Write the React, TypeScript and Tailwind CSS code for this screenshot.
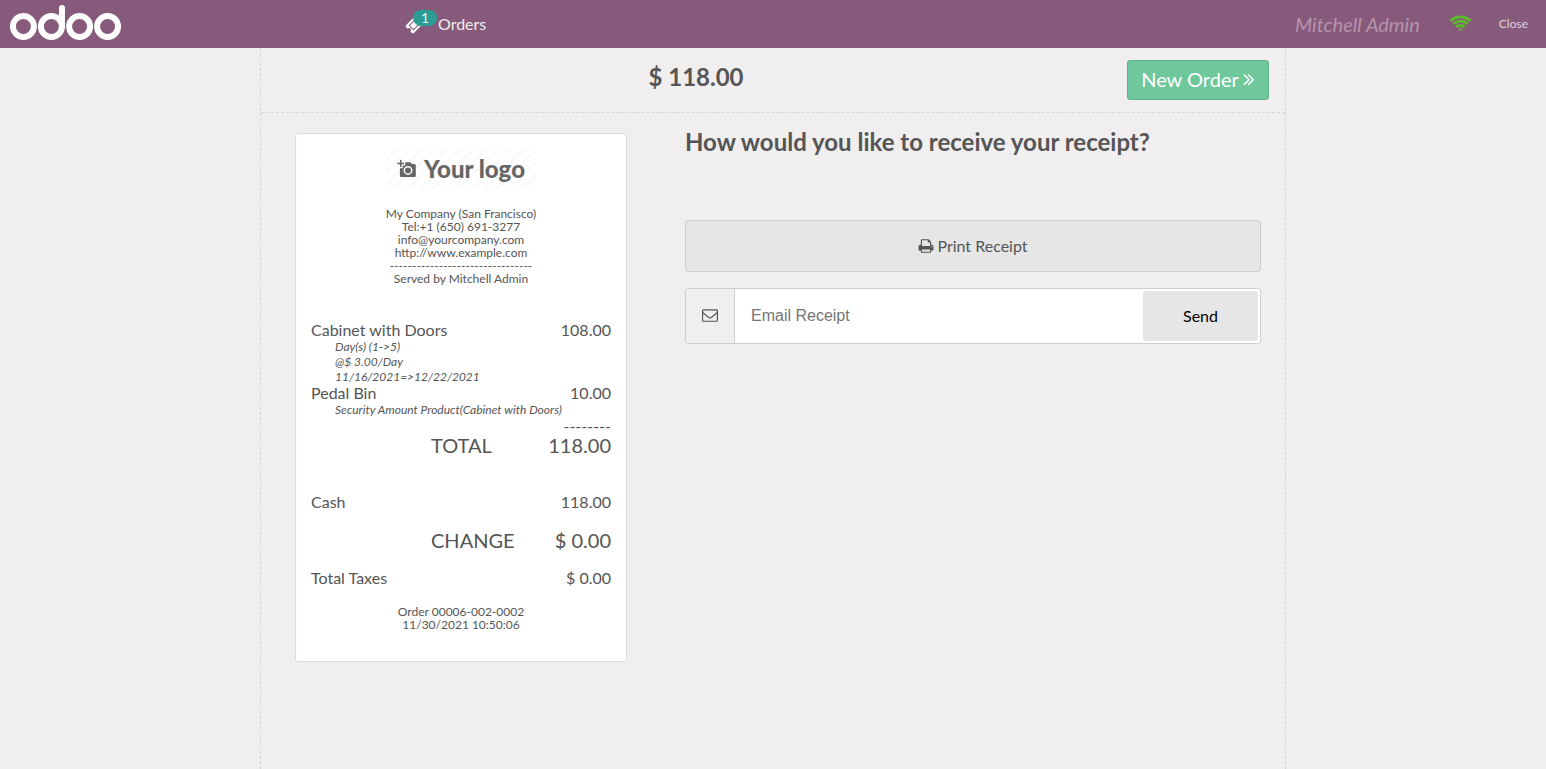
import type { ReactNode } from "react";

type IconProps = { path: string; className: string; viewBox?: string };

function Icon({ path, className, viewBox = "0 0 1792 1792" }: IconProps) {
  return (
    <svg viewBox={viewBox} className={className} fill="currentColor" aria-hidden="true">
      <path d={path} />
    </svg>
  );
}

const TICKET =
  "M1024 452l316 316-572 572-316-316zm-211 979l618-618q19-19 19-45t-19-45l-362-362q-18-18-45-18t-45 18l-618 618q-19 19-19 45t19 45l362 362q18 18 45 18t45-18zm889-637l-907 908q-37 37-90.5 37t-90.5-37l-126-125q56-56 56-136t-56-136-136-56-136 56l-125-126q-37-37-37-90.5t37-90.5l907-906q37-37 90.5-37t90.5 37l125 125q-56 56-56 136t56 136 136 56 136-56l126 125q37 37 37 90.5t-37 90.5z";
const WIFI =
  "M1024 1523q-20 0-93-73.5t-73-93.5q0-32 62.5-54t103.5-22 103.5 22 62.5 54q0 20-73 93.5t-93 73.5zm270-271q-2 0-40-25t-101.5-50-128.5-25-128.5 25-101 50-40.5 25q-18 0-93.5-75t-75.5-93q0-13 10-23 78-77 196-121t233-44 233 44 196 121q10 10 10 23 0 18-75.5 93t-93.5 75zm273-272q-11 0-23-8-136-105-252-154.5t-268-49.5q-85 0-170.5 22t-149 53-113.500 62-79 53-31 22q-17 0-92-75t-75-93q0-12 10-22 132-132 320-205t380-73 380 73 320 205q10 10 10 22 0 18-75 93t-92 75zm271-271q-11 0-22-9-179-157-371.500-236.500t-420.500-79.500-420.500 79.500-371.500 236.500q-11 9-22 9-17 0-92.500-75t-75.500-93q0-13 10-23 187-186 445-288t527-102 527 102 445 288q10 10 10 23 0 18-75.500 93t-92.500 75z";
const PRINTER =
  "M448 1536h896v-256h-896v256zm0-640h896v-384h-160q-40 0-68-28t-28-68v-160h-640v640zm1152 64q0-26-19-45t-45-19-45 19-19 45 19 45 45 19 45-19 19-45zm128 0v416q0 13-9.5 22.5t-22.5 9.5h-224v160q0 40-28 68t-68 28h-960q-40 0-68-28t-28-68v-160h-224q-13 0-22.5-9.5t-9.5-22.5v-416q0-79 56.5-135.5t135.5-56.5h64v-544q0-40 28-68t68-28h672q40 0 88 20t76 48l152 152q28 28 48 76t20 88v256h64q79 0 135.5 56.5t56.5 135.5z";
const ENVELOPE =
  "M1664 1504v-768q-32 36-69 66-268 206-426 338-51 43-83 67t-86.5 48.5-102.5 24.5h-2q-48 0-102.5-24.5t-86.5-48.5-83-67q-158-132-426-338-37-30-69-66v768q0 13 9.5 22.5t22.5 9.5h1472q13 0 22.5-9.5t9.5-22.5zm0-1051v-24.5l-.5-13-3-12.5-5.5-9-9-7.5-14-2.5h-1472q-13 0-22.5 9.5t-9.5 22.5q0 168 147 284 193 152 401 317 6 5 35 29.5t46 37.5 44.5 31.5 50.5 27.5 43 9h2q20 0 43-9t50.5-27.5 44.5-31.5 46-37.5 35-29.5q208-165 401-317 54-43 100.5-115.5t46.5-131.5zm128-37v1088q0 66-47 113t-113 47h-1472q-66 0-113-47t-47-113v-1088q0-66 47-113t113-47h1472q66 0 113 47t47 113z";
const ANGLES_RIGHT =
  "M979 960q0 13-10 23l-466 466q-10 10-23 10t-23-10l-50-50q-10-10-10-23t10-23l393-393-393-393q-10-10-10-23t10-23l50-50q10-10 23-10t23 10l466 466q10 10 10 23zm384 0q0 13-10 23l-466 466q-10 10-23 10t-23-10l-50-50q-10-10-10-23t10-23l393-393-393-393q-10-10-10-23t10-23l50-50q10-10 23-10t23 10l466 466q10 10 10 23z";

function OdooLogo() {
  return (
    <svg viewBox="10 4 112 37" className="h-[37px] w-28" fill="none" stroke="#fff" strokeWidth="6" role="img" aria-label="odoo">
      <circle cx="23.4" cy="26.5" r="10.5" />
      <circle cx="51.4" cy="26.5" r="10.5" />
      <circle cx="79.6" cy="26.5" r="10.5" />
      <circle cx="107.6" cy="26.5" r="10.5" />
      <path d="M62 8V26.5" strokeLinecap="round" />
    </svg>
  );
}

function Header() {
  return (
    <header className="flex h-12 items-center bg-[#875a7b] text-[#f0eeee]">
      <div className="w-[405px] shrink-0 pb-[3px] pl-[10px]">
        <OdooLogo />
      </div>
      <button type="button" className="flex items-center text-base">
        <span className="relative w-[33px]">
          <Icon path={TICKET} className="size-5 text-white" />
          <span className="absolute -top-1 left-2 flex h-4 w-6 items-center justify-center rounded-full bg-[#2a9d94] text-sm leading-4 text-[#f0eeee]">
            1
          </span>
        </span>
        Orders
      </button>
      <div className="ml-auto flex items-center pr-[18px]">
        <span className="text-xl italic text-[#b594ad]">Mitchell Admin</span>
        <Icon path={WIFI} viewBox="0 0 2048 1792" className="mr-[27px] ml-[29px] h-5 w-[23px] text-[#5cb92c]" />
        <button type="button" className="text-xs text-[#dfd3dc]">
          Close
        </button>
      </div>
    </header>
  );
}

function CompanyLogo() {
  return (
    <div className="mx-auto flex h-10 w-[150px] items-center justify-center gap-2 bg-[repeating-linear-gradient(135deg,#fff_0px,#fff_6px,#fafafa_6px,#fafafa_9px)] text-[#666]">
      <svg viewBox="0 0 19 18" className="h-[18px] w-[19px]" aria-hidden="true">
        <path
          fill="currentColor"
          fillRule="evenodd"
          d="M3 0h1.500v2.800h2.500v1.500H4.500v2.700H3V4.300H.3V2.800H3zM8.300 2.200h5.200l1.500 1.900h2.500q1.300 0 1.300 1.300v10.300q0 1.300-1.300 1.300H4.200q-1.300 0-1.300-1.300V8.200h2.800V5.500h2.600zM11 5.900a4.500 4.500 0 1 0 0 9 4.500 4.500 0 1 0 0-9zm0 1.500a3 3 0 1 1 0 6 3 3 0 1 1 0-6z"
        />
      </svg>
      <span className="text-2xl leading-6 font-black whitespace-nowrap">Your logo</span>
    </div>
  );
}

function Line({ label, value }: { label: string; value: string }) {
  return (
    <div className="flex justify-between leading-[18px]">
      <span>{label}</span>
      <span>{value}</span>
    </div>
  );
}

function TotalLine({ label, value }: { label: string; value: string }) {
  return (
    <div className="flex justify-between pl-[120px] text-xl leading-5">
      <span>{label}</span>
      <span>{value}</span>
    </div>
  );
}

function Detail({ children }: { children: ReactNode }) {
  return <p className="pl-6 text-xs leading-[15px] whitespace-nowrap italic">{children}</p>;
}

function Receipt() {
  return (
    <section aria-label="Receipt" className="w-[332px] rounded-[3px] border border-[#dcdcdc] bg-white px-[15px] pt-[15px] pb-[30px]">
      <CompanyLogo />
      <div className="mt-[18px] text-center text-xs leading-[13px]">
        <p>My Company (San Francisco)</p>
        <p>Tel:+1 (650) 691-3277</p>
        <p>info@yourcompany.com</p>
        <p>http://www.example.com</p>
        <p>--------------------------------</p>
        <p>Served by Mitchell Admin</p>
      </div>
      <div className="mt-9">
        <Line label="Cabinet with Doors" value="108.00" />
        <Detail>Day(s) (1-&gt;5)</Detail>
        <Detail>@$ 3.00/Day</Detail>
        <Detail>11/16/2021=&gt;12/22/2021</Detail>
        <Line label="Pedal Bin" value="10.00" />
        <Detail>Security Amount Product(Cabinet with Doors)</Detail>
      </div>
      <p className="text-right leading-[18px]">--------</p>
      <TotalLine label="TOTAL" value="118.00" />
      <div className="mt-[38px] flex flex-col gap-[19px]">
        <Line label="Cash" value="118.00" />
        <TotalLine label="CHANGE" value="$ 0.00" />
        <Line label="Total Taxes" value="$ 0.00" />
      </div>
      <div className="mt-[18px] text-center text-xs leading-[13px]">
        <p>Order 00006-002-0002</p>
        <p>11/30/2021 10:50:06</p>
      </div>
    </section>
  );
}

function ReceiptOptions() {
  return (
    <section className="min-w-0 flex-1 px-6 pt-[13px]">
      <h2 className="text-2xl leading-8 font-bold">How would you like to receive your receipt?</h2>
      <button
        type="button"
        className="mt-[62px] flex h-[52px] w-full items-center justify-center gap-[3px] rounded-[3px] border border-[#cfcdcd] bg-[#e6e6e6] text-base"
      >
        <Icon path={PRINTER} className="size-4" />
        Print Receipt
      </button>
      <form className="mt-4 flex h-14 rounded-[3px] border border-[#cfcdcd] bg-white" onSubmit={(e) => e.preventDefault()}>
        <label
          htmlFor="email"
          aria-label="Email Receipt"
          className="flex w-[49px] shrink-0 items-center justify-center rounded-l-[2px] border-r border-[#cfcdcd] bg-[#f0eeee] pb-[2px]"
        >
          <Icon path={ENVELOPE} className="size-4" />
        </label>
        <input
          id="email"
          type="email"
          placeholder="Email Receipt"
          className="min-w-0 flex-1 bg-transparent px-4 font-['Liberation_Sans',sans-serif] text-base outline-none placeholder:text-[#757575]"
        />
        <button type="submit" className="m-[2px] w-[115px] shrink-0 rounded-[3px] bg-[#e6e6e6] text-base text-black">
          Send
        </button>
      </form>
    </section>
  );
}

export default function App() {
  return (
    <div className="flex min-h-screen flex-col bg-[#f0eeee] font-[Lato,sans-serif] text-[#555]">
      <Header />
      <main className="mx-auto w-full max-w-[1026px] flex-1 border-x border-dashed border-[#d6d6d6]">
        <div className="flex h-[65px] items-center border-b border-dashed border-[#d6d6d6] pr-4">
          <h1 className="flex-1 pb-[6px] pl-1 text-center text-2xl font-bold">$ 118.00</h1>
          <button
            type="button"
            className="flex h-10 w-[142px] items-center justify-center gap-1 rounded-[3px] border border-[#64af8a] bg-[#6ec89b] pb-[2px] text-xl text-white"
          >
            New Order
            <Icon path={ANGLES_RIGHT} viewBox="384 0 1024 1792" className="h-5 w-3" />
          </button>
        </div>
        <div className="flex">
          <div className="flex w-[400px] shrink-0 justify-center pt-5 pb-5">
            <Receipt />
          </div>
          <ReceiptOptions />
        </div>
      </main>
    </div>
  );
}
